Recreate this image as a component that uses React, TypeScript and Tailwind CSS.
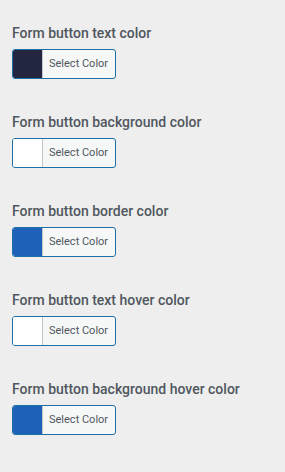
const items = [
  { label: 'Form button text color', color: 'bg-[#222641]' },
  { label: 'Form button background color', color: 'bg-white' },
  { label: 'Form button border color', color: 'bg-[#1d62b8]' },
  { label: 'Form button text hover color', color: 'bg-white' },
  { label: 'Form button background hover color', color: 'bg-[#1d62b8]' },
];

export default function App() {
  return (
    <div className="min-h-[472px] w-[285px] bg-[#eeeeee] pl-3 pt-[23px] font-['Roboto',sans-serif]">
      {items.map((item) => (
        <div key={item.label} className="mb-[33px]">
          <div className="text-[14px] leading-5 font-medium text-[#50575e]">{item.label}</div>
          <div className="mt-[6px] flex h-[30px] w-[104px] overflow-hidden rounded-[3px] border border-[#1e6fa8] bg-[#f6f7f7]">
            <span className={`w-[30px] border-r border-[#c3c4c7] ${item.color}`} />
            <span className="flex flex-1 items-center pl-[6px] text-[11px] text-[#50575e]">Select Color</span>
          </div>
        </div>
      ))}
    </div>
  );
}
